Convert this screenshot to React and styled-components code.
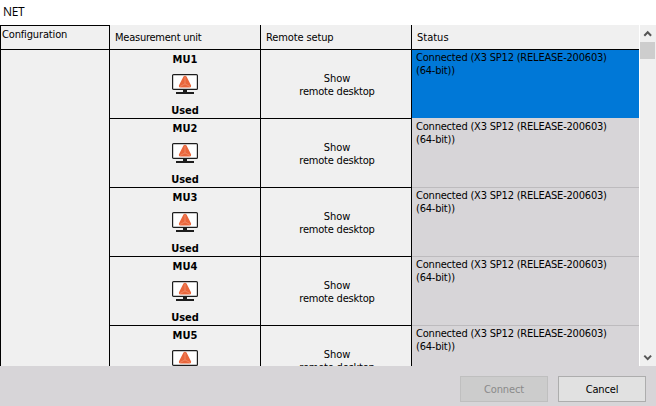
import styled, { createGlobalStyle } from "styled-components";

const units = ["MU1", "MU2", "MU3", "MU4", "MU5"];

const App = () => {
    return (
        <>
            <GlobalStyle />
            <Window>
                <TitleBar>NET</TitleBar>
                <Content>
                    <ConfigColumn>
                        <ConfigHeader>Configuration</ConfigHeader>
                    </ConfigColumn>
                    <Table>
                        <HeaderRow>
                            <HeaderCell><Label $spacing={-0.24}>Measurement unit</Label></HeaderCell>
                            <HeaderCell><Label $spacing={-0.12}>Remote setup</Label></HeaderCell>
                            <HeaderCell $last>Status</HeaderCell>
                        </HeaderRow>
                        {units.map((name, index) => {
                            return <UnitRow key={name} name={name} selected={index === 0} />
                        })}
                    </Table>
                    <Scrollbar>
                        <Arrow up />
                        <Thumb />
                        <Arrow />
                    </Scrollbar>
                </Content>
                <Footer>
                    <Button disabled>Connect</Button>
                    <Button>Cancel</Button>
                </Footer>
            </Window>
        </>
    );
}

const UnitRow = ({ name, selected }) => (
    <Row>
        <UnitCell>
            <Strong>{name}</Strong>
            <MonitorIcon />
            <Strong>Used</Strong>
        </UnitCell>
        <RemoteCell>
            <span>Show</span>
            <Label $spacing={-0.2}>remote desktop</Label>
        </RemoteCell>
        <StatusCell $selected={selected}>
            <Label $spacing={-0.2}>Connected (X3 SP12 (RELEASE-200603)</Label>
            <Label $spacing={-0.2}>(64-bit))</Label>
        </StatusCell>
    </Row>
);

const MonitorIcon = () => (
    <svg width="26" height="22" viewBox="0 0 26 22">
        <rect x="0.6" y="0.6" width="24.8" height="14.8" rx="1" fill="#fff" stroke="#1d1d1d" strokeWidth="1.2" />
        <path d="M11 16h4v2h-4z" fill="#1d1d1d" />
        <path d="M4 18h18v2h-18z" fill="#1d1d1d" />
        <path d="M13 1.8 Q14.2 1.8 14.8 3 L19.1 11.4 Q19.6 13.4 17.7 13.5 H8.3 Q6.4 13.4 6.9 11.4 L11.2 3 Q11.8 1.8 13 1.8z" fill="#e9663c" />
        <path d="M13 2.5v7.4M13 9.9L7.8 12.6M13 9.9L18.2 12.6" stroke="#f5a88a" strokeWidth="0.5" fill="none" />
    </svg>
);

const Arrow = ({ up }) => (
    <svg width="16" height="17" viewBox="0 0 16 17">
        <path d={up ? "M4.3 10.8L7.7 7.3L11.1 10.8" : "M4.3 6.6L7.7 10.1L11.1 6.6"} fill="none" stroke="#555" strokeWidth="2" />
    </svg>
);

const GlobalStyle = createGlobalStyle`
    * {
        box-sizing: border-box;
    }

    body {
        margin: 0;
        background-color: white;
        overflow: hidden;
    }
`

const Window = styled.div`
    display: flex;
    flex-direction: column;
    width: 656px;
    height: 406px;
    background-color: #d7d5d8;
    color: black;
    font: 11px/13px "DejaVu Sans Condensed", "DejaVu Sans", sans-serif;
    font-stretch: condensed;
    white-space: nowrap;
`

const TitleBar = styled.div`
    height: 25px;
    padding: 4px 0 0 3px;
    background-color: white;
    font: 12px/16px "Open Sans", sans-serif;
    letter-spacing: -0.4px;
`

const Content = styled.div`
    display: flex;
    height: 341px;
    overflow: hidden;
    background-color: white;
`

const ConfigColumn = styled.div`
    width: 110px;
    border: 1px solid black;
    border-bottom: none;
    background-color: #f0f0f0;
`

const ConfigHeader = styled.div`
    height: 24px;
    padding: 2px 0 0 1px;
    border-bottom: 1px solid black;
    letter-spacing: -0.15px;
`

const Table = styled.div`
    width: 529px;
    background-color: #f0f0f0;
`

const HeaderRow = styled.div`
    display: grid;
    grid-template-columns: 151px 151px 227px;
    height: 25px;
    border-bottom: 1px solid black;
`

const HeaderCell = styled.div`
    padding: 6px 0 0 5px;
    border-right: ${({ $last }) => ($last ? "none" : "1px solid black")};
`

const Label = styled.span`
    letter-spacing: ${({ $spacing }) => $spacing}px;
`

const Row = styled.div`
    display: grid;
    grid-template-columns: 151px 151px 227px;
    height: 69px;
`

const Cell = styled.div`
    display: flex;
    flex-direction: column;
    align-items: center;
    border-bottom: 1px solid black;
    border-right: 1px solid black;
`

const UnitCell = styled(Cell)`
    justify-content: space-between;
    padding: 3px 0 1px;
`

const RemoteCell = styled(Cell)`
    justify-content: center;
    padding: 1px 0 0 2px;
`

const StatusCell = styled(Cell)`
    align-items: flex-start;
    padding: 1px 0 0 4px;
    border-right: none;
    border-bottom-color: ${({ $selected }) => ($selected ? "#d7d5d8" : "#bdbbbe")};
    background-color: ${({ $selected }) => ($selected ? "#0078d7" : "#d7d5d8")};
`

const Strong = styled.b`
    font-weight: bold;
`

const Scrollbar = styled.div`
    display: flex;
    flex-direction: column;
    width: 16px;
    margin-left: 1px;
    background-color: #f0f0f0;

    svg:last-child {
        margin-top: auto;
    }
`

const Thumb = styled.div`
    width: 15px;
    height: 17px;
    background-color: #cdcdcd;
`

const Footer = styled.div`
    display: flex;
    justify-content: flex-end;
    gap: 10px;
    padding: 10px 10px 0 0;
`

const Button = styled.button`
    width: 88px;
    height: 26px;
    padding: 0;
    border: 1px solid #adadad;
    background-color: #e1e1e1;
    color: black;
    font: inherit;
    letter-spacing: -0.15px;

    &:disabled {
        border-color: #bfbfbf;
        background-color: #cccccc;
        color: #8a8a8a;
    }
`

export default App;
